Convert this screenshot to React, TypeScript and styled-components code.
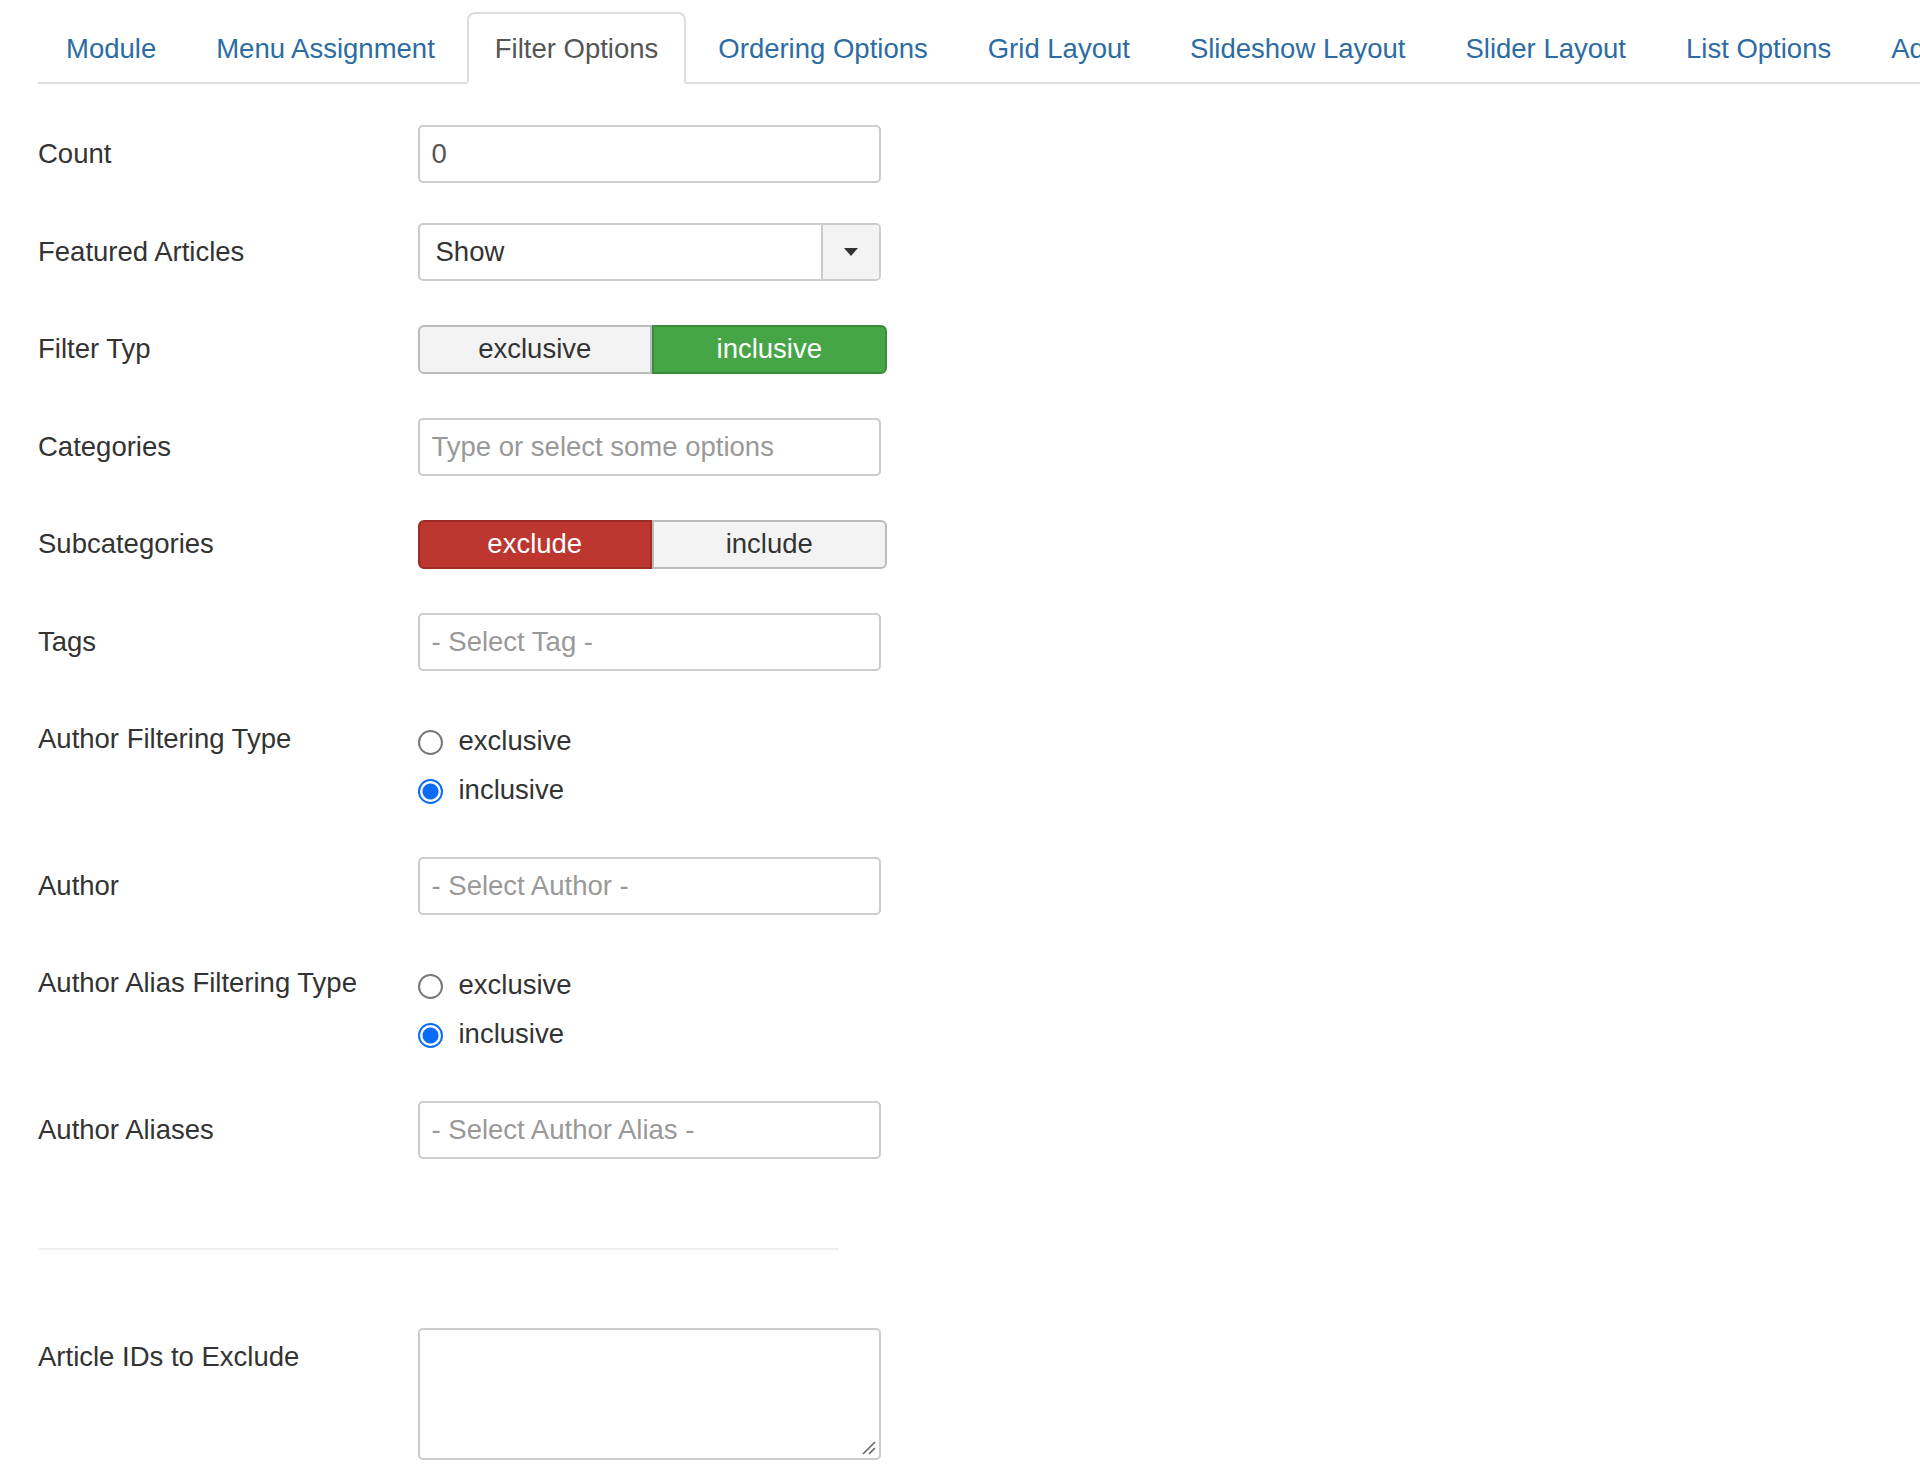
import React from "react";
import styled, { createGlobalStyle } from "styled-components";

const Global = createGlobalStyle`
  html, body { margin: 0; padding: 0; background: #fff; }
  body { font-family: "Liberation Sans", Arial, Helvetica, sans-serif; color: #333; }
  * { box-sizing: border-box; }
`;

const Page = styled.div`
  padding: 12px 0 0 38px;
  width: 1920px;
  height: 1484px;
  overflow: hidden;
`;

const TabBar = styled.ul`
  display: flex;
  margin: 0;
  padding: 0;
  list-style: none;
  border-bottom: 2px solid #ddd;
  white-space: nowrap;
`;

const Tab = styled.li<{ $active?: boolean }>`
  height: 72px;
  margin-right: 4px;
  margin-bottom: -2px;
  padding: 2px 26px 0;
  display: flex;
  align-items: center;
  font-size: 27.5px;
  color: ${(p) => (p.$active ? "#555" : "#2d6ca2")};
  background: ${(p) => (p.$active ? "#fff" : "transparent")};
  border: 2px solid ${(p) => (p.$active ? "#ddd" : "transparent")};
  border-bottom-color: ${(p) => (p.$active ? "#fff" : "transparent")};
  border-radius: 8px 8px 0 0;
`;

const Form = styled.div`
  padding-top: 41px;
  width: 860px;
`;

const Row = styled.div`
  display: flex;
  align-items: flex-start;
  margin-bottom: 39.5px;
`;

const Label = styled.label`
  width: 379.5px;
  flex: none;
  line-height: 58px;
  font-size: 27.5px;
  color: #333;
`;

const Controls = styled.div`
  display: flex;
  flex-direction: column;
`;

const TextInput = styled.div<{ $placeholder?: boolean }>`
  width: 463px;
  height: 58px;
  border: 2px solid #ccc;
  border-radius: 5px;
  display: flex;
  align-items: center;
  padding-left: 12px;
  font-size: 27.5px;
  color: ${(p) => (p.$placeholder ? "#999" : "#555")};
  background: #fff;
`;

const Select = styled.div`
  width: 463px;
  height: 58px;
  border: 2px solid #ccc;
  border-radius: 5px;
  display: flex;
  font-size: 27.5px;
  color: #555;
  overflow: hidden;
`;

const SelectValue = styled.div`
  flex: 1;
  display: flex;
  align-items: center;
  padding-left: 16px;
  color: #333;
`;

const SelectButton = styled.div`
  width: 58px;
  border-left: 2px solid #ccc;
  background: #f3f3f3;
  display: flex;
  align-items: center;
  justify-content: center;
`;

const Caret = styled.span`
  width: 0;
  height: 0;
  border-left: 7px solid transparent;
  border-right: 7px solid transparent;
  border-top: 8px solid #333;
`;

const ToggleSlot = styled.div`
  height: 58px;
  display: flex;
  align-items: center;
`;

const ToggleGroup = styled.div`
  display: flex;
  width: 469px;
  height: 49px;
`;

const ToggleBtn = styled.div<{ $variant?: "success" | "danger" }>`
  flex: 1;
  display: flex;
  align-items: center;
  justify-content: center;
  font-size: 27.5px;
  color: ${(p) => (p.$variant ? "#fff" : "#333")};
  background: ${(p) =>
    p.$variant === "success" ? "#46a546" : p.$variant === "danger" ? "#bd362f" : "#f3f3f3"};
  border: 2px solid
    ${(p) =>
      p.$variant === "success" ? "#3a8c3a" : p.$variant === "danger" ? "#9c2c26" : "#bbb"};
  &:first-child { border-radius: 6px 0 0 6px; }
  &:last-child { border-radius: 0 6px 6px 0; }
  &:first-child + & { border-left-width: ${(p) => (p.$variant ? "2px" : "0")}; }
`;

const RadioList = styled.div`
  padding-top: 6px;
  padding-bottom: 3px;
`;

const RadioLine = styled.div`
  display: flex;
  align-items: center;
  height: 49px;
  font-size: 27.5px;
  color: #333;
`;

const Radio = styled.span<{ $checked?: boolean }>`
  width: 25px;
  height: 25px;
  border-radius: 50%;
  margin: 4px 16px 0 0;
  flex: none;
  border: 2px solid ${(p) => (p.$checked ? "#0a6cf5" : "#777")};
  background: ${(p) =>
    p.$checked ? "radial-gradient(circle, #0a6cf5 0 7.5px, #fff 8.5px)" : "#fff"};
`;

const Divider = styled.hr`
  width: 801px;
  margin: 89px 0 78px 0;
  border: none;
  border-top: 2px solid #eee;
`;

const TextArea = styled.div`
  width: 463px;
  height: 132px;
  border: 2px solid #ccc;
  border-radius: 5px;
  position: relative;
  background: #fff;
`;

const ResizeHandle = styled.svg`
  position: absolute;
  right: 3px;
  bottom: 3px;
`;

const tabs = [
  "Module",
  "Menu Assignment",
  "Filter Options",
  "Ordering Options",
  "Grid Layout",
  "Slideshow Layout",
  "Slider Layout",
  "List Options",
  "Advanced",
];

function RadioField({ label }: { label: string }) {
  return (
    <Row>
      <Label>{label}</Label>
      <RadioList>
        <RadioLine>
          <Radio />
          exclusive
        </RadioLine>
        <RadioLine>
          <Radio $checked />
          inclusive
        </RadioLine>
      </RadioList>
    </Row>
  );
}

export default function App() {
  return (
    <Page>
      <Global />
      <TabBar>
        {tabs.map((t) => (
          <Tab key={t} $active={t === "Filter Options"}>
            {t}
          </Tab>
        ))}
      </TabBar>
      <Form>
        <Row>
          <Label>Count</Label>
          <TextInput>0</TextInput>
        </Row>
        <Row>
          <Label>Featured Articles</Label>
          <Select>
            <SelectValue>Show</SelectValue>
            <SelectButton>
              <Caret />
            </SelectButton>
          </Select>
        </Row>
        <Row>
          <Label>Filter Typ</Label>
          <ToggleSlot>
            <ToggleGroup>
              <ToggleBtn>exclusive</ToggleBtn>
              <ToggleBtn $variant="success">inclusive</ToggleBtn>
            </ToggleGroup>
          </ToggleSlot>
        </Row>
        <Row>
          <Label>Categories</Label>
          <TextInput $placeholder>Type or select some options</TextInput>
        </Row>
        <Row>
          <Label>Subcategories</Label>
          <ToggleSlot>
            <ToggleGroup>
              <ToggleBtn $variant="danger">exclude</ToggleBtn>
              <ToggleBtn>include</ToggleBtn>
            </ToggleGroup>
          </ToggleSlot>
        </Row>
        <Row>
          <Label>Tags</Label>
          <TextInput $placeholder>- Select Tag -</TextInput>
        </Row>
        <RadioField label="Author Filtering Type" />
        <Row>
          <Label>Author</Label>
          <TextInput $placeholder>- Select Author -</TextInput>
        </Row>
        <RadioField label="Author Alias Filtering Type" />
        <Row>
          <Label>Author Aliases</Label>
          <TextInput $placeholder>- Select Author Alias -</TextInput>
        </Row>
        <Divider />
        <Row>
          <Label>Article IDs to Exclude</Label>
          <Controls>
            <TextArea>
              <ResizeHandle width="16" height="16" viewBox="0 0 16 16">
                <path d="M3 15 L15 3 M9 15 L15 9" stroke="#666" strokeWidth="1.6" />
              </ResizeHandle>
            </TextArea>
          </Controls>
        </Row>
      </Form>
    </Page>
  );
}
